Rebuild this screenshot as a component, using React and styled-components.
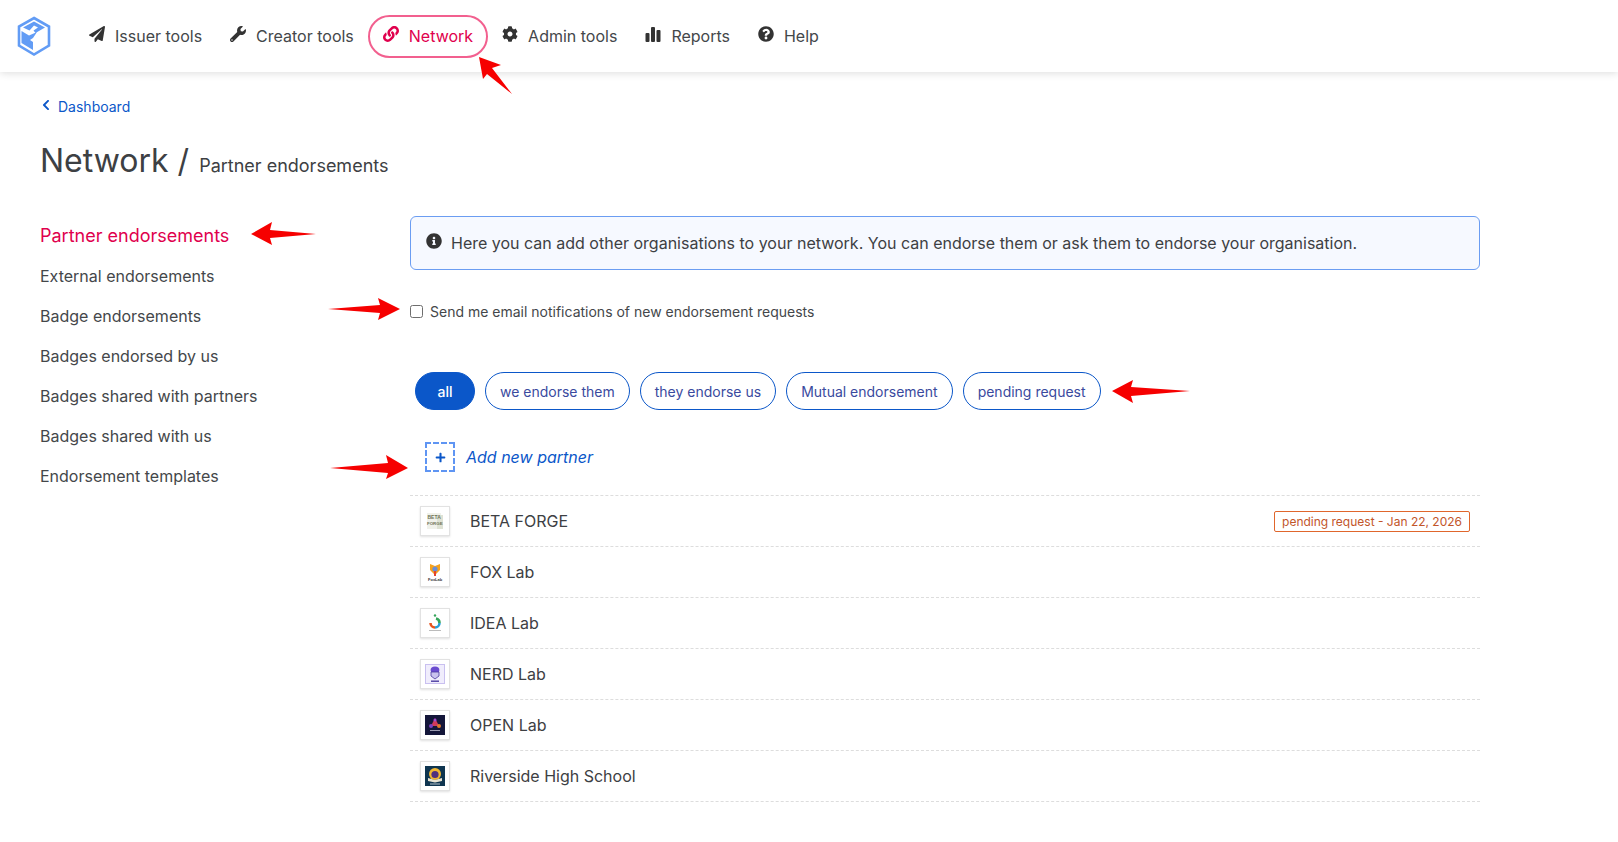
import styled, { createGlobalStyle } from 'styled-components'
import {
  FaChevronLeft,
  FaCog,
  FaInfoCircle,
  FaLink,
  FaPaperPlane,
  FaPlus,
  FaQuestionCircle,
  FaWrench,
} from 'react-icons/fa'

const GlobalStyle = createGlobalStyle`
  html, body {
    margin: 0;
    padding: 0;
    background: #fff;
    color: #3d4043;
    font-family: Inter, "Noto Sans", sans-serif;
  }
`

const Root = styled.div`
  position: relative;
  width: 1618px;
  height: 842px;
  overflow: hidden;
`

const Header = styled.header`
  display: flex;
  align-items: center;
  height: 72px;
  background: #fff;
  box-shadow: 0 1px 8px rgba(0, 0, 0, 0.14);
  padding-left: 17px;
`

const Logo = styled.svg`
  width: 34px;
  height: 41px;
  margin-right: 24px;
  flex: none;
`

const Nav = styled.nav`
  display: flex;
  align-items: center;
`

const NavItem = styled.a`
  display: flex;
  align-items: center;
  gap: 10px;
  height: 43px;
  margin: 0 ${(p) => (p.$active ? 0 : 14)}px;
  padding: 0 ${(p) => (p.$active ? 13 : 0)}px;
  box-sizing: border-box;
  border: ${(p) => (p.$active ? '2px solid #f2608f' : '0')};
  border-radius: 22px;
  font-size: 16px;
  color: ${(p) => (p.$active ? '#e0004d' : '#44474a')};
  svg {
    width: 16px;
    height: 16px;
    flex: none;
    margin-top: -4px;
    color: ${(p) => (p.$active ? '#e0004d' : '#333')};
  }
`

const Content = styled.div`
  padding: 26px 138px 0 40px;
`

const BackLink = styled.a`
  display: flex;
  align-items: center;
  gap: 7px;
  height: 17px;
  font-size: 14px;
  color: #0b57c9;
  svg {
    width: 10px;
    height: 12px;
    margin: -3px 0 0 1px;
  }
`

const Title = styled.h1`
  display: flex;
  align-items: baseline;
  gap: 10px;
  margin: 26px 0 0;
  height: 40px;
  font-size: 32px;
  line-height: 40px;
  font-weight: 400;
  color: #3d4043;
  small {
    font-size: 18px;
  }
`

const Columns = styled.div`
  display: grid;
  grid-template-columns: 370px 1070px;
  margin-top: 35px;
`

const SideNav = styled.ul`
  list-style: none;
  margin: 0;
  padding: 0;
`

const SideItem = styled.li`
  height: 40px;
  line-height: 40px;
  font-size: ${(p) => (p.$active ? 18 : 16)}px;
  color: ${(p) => (p.$active ? '#e0004d' : '#44474a')};
`

const Main = styled.main`
  display: flex;
  flex-direction: column;
`

const Alert = styled.div`
  display: flex;
  align-items: center;
  gap: 9px;
  height: 54px;
  box-sizing: border-box;
  padding: 0 15px;
  background: #f6f9ff;
  border: 1px solid #6b9df2;
  border-radius: 6px;
  font-size: 16px;
  color: #3d4043;
  svg {
    width: 16px;
    height: 16px;
    margin-top: -4px;
    flex: none;
    color: #333;
  }
`

const CheckRow = styled.label`
  display: flex;
  align-items: center;
  gap: 7px;
  margin-top: 32px;
  height: 18px;
  font-size: 14px;
  color: #44474a;
`

const CheckBox = styled.span`
  width: 13px;
  height: 13px;
  box-sizing: border-box;
  border: 1px solid #6e6e6e;
  border-radius: 2.5px;
  flex: none;
`

const Pills = styled.div`
  display: flex;
  gap: 10px;
  margin: 52px 0 0 5px;
`

const Pill = styled.button`
  height: 38px;
  padding: 0 14px;
  box-sizing: border-box;
  background: ${(p) => (p.$active ? '#0b57c9' : '#fff')};
  border: 1px solid #0b57c9;
  border-radius: 19px;
  font-family: inherit;
  font-size: 14px;
  font-weight: ${(p) => (p.$active ? 500 : 400)};
  color: ${(p) => (p.$active ? '#fff' : '#3a4a9e')};
  min-width: ${(p) => (p.$active ? 60 : 0)}px;
`

const AddRow = styled.div`
  display: flex;
  align-items: center;
  gap: 11px;
  height: 86px;
  box-sizing: border-box;
  padding: 9px 0 0 15px;
  border-bottom: 1px dashed #ddd;
  font-size: 16px;
  font-style: italic;
  color: #0b57c9;
`

const AddBox = styled.span`
  display: flex;
  align-items: center;
  justify-content: center;
  width: 30px;
  height: 30px;
  box-sizing: border-box;
  border: 2px dashed #5f95f3;
  color: #0b57c9;
  svg {
    width: 11px;
    height: 11px;
  }
`

const PartnerRow = styled.div`
  display: flex;
  align-items: center;
  gap: 20px;
  height: 51px;
  box-sizing: border-box;
  padding: 0 10px;
  border-bottom: 1px dashed #ddd;
  font-size: 16px;
  color: #3d4043;
`

const Thumb = styled.span`
  display: flex;
  align-items: center;
  justify-content: center;
  width: 30px;
  height: 30px;
  box-sizing: border-box;
  background: #fff;
  border: 1px solid #e2e2e2;
  box-shadow: 0 1px 2px rgba(0, 0, 0, 0.12);
  svg {
    width: 20px;
    height: 20px;
  }
`

const StatusTag = styled.span`
  margin-left: auto;
  height: 21px;
  line-height: 19px;
  box-sizing: border-box;
  padding: 0 7px;
  border: 1px solid #e0662c;
  border-radius: 2px;
  font-size: 12px;
  color: #c2552a;
`

const Arrow = styled.svg`
  position: absolute;
  left: ${(p) => p.$x}px;
  top: ${(p) => p.$y}px;
  overflow: visible;
`

const BarsIcon = () => (
  <svg viewBox="0 0 16 16" fill="currentColor">
    <rect x="0.5" y="7" width="4" height="9" rx="1" />
    <rect x="6" y="1" width="4" height="15" rx="1" />
    <rect x="11.5" y="4" width="4" height="12" rx="1" />
  </svg>
)

const BetaLogo = () => (
  <svg viewBox="0 0 20 20">
    <rect x="2" y="2" width="14" height="16" fill="#f0f1ea" />
    <rect x="12" y="4" width="6" height="14" fill="#dfe2d4" />
    <text x="2.5" y="8" fontSize="5" fontWeight="700" fontFamily="Liberation Sans, sans-serif" fill="#6f7558">BETA</text>
    <text x="2" y="14" fontSize="4.4" fontWeight="700" fontFamily="Liberation Sans, sans-serif" fill="#6f7558">FORGE</text>
  </svg>
)

const FoxLogo = () => (
  <svg viewBox="0 0 20 20">
    <path d="M5 2 L10 4 L15 2 L15 8 L10 13 L5 8 Z" fill="#f7a21b" />
    <circle cx="10" cy="7" r="2.6" fill="#6a8fd6" />
    <path d="M9 9 H11 V14 H9 Z" fill="#e2452e" />
    <text x="3" y="19" fontSize="4" fontWeight="700" fontFamily="Liberation Sans, sans-serif" fill="#333">FoxLab</text>
  </svg>
)

const IdeaLogo = () => (
  <svg viewBox="0 0 20 20" fill="none">
    <path d="M5.5 10 A4.5 4.5 0 0 0 10 14.5" stroke="#e8541e" strokeWidth="2.6" />
    <path d="M10 14.5 A4.5 4.5 0 0 0 14.5 10" stroke="#2a9fd8" strokeWidth="2.6" />
    <path d="M14.5 10 A4.5 4.5 0 0 0 11 5.6" stroke="#35a55a" strokeWidth="2.6" />
    <circle cx="10" cy="2.5" r="1.2" fill="#35a55a" />
    <rect x="4" y="17" width="12" height="1" fill="#bbb" />
  </svg>
)

const NerdLogo = () => (
  <svg viewBox="0 0 20 20">
    <rect x="0.5" y="0.5" width="19" height="19" fill="#f0edfc" stroke="#c9c0f0" />
    <ellipse cx="10" cy="6" rx="4.4" ry="3.6" fill="#6a4bd0" />
    <path d="M6 8 H14 V12 L10 15 L6 12 Z" fill="#c9c2ee" stroke="#4a3aa0" strokeWidth="0.8" />
    <rect x="6" y="16.5" width="8" height="1.4" fill="#4a3aa0" />
  </svg>
)

const OpenLogo = () => (
  <svg viewBox="0 0 20 20">
    <rect width="20" height="20" fill="#14163a" />
    <path d="M10 3 L14 11 H6 Z" fill="#d13a5a" />
    <circle cx="6" cy="11" r="2" fill="#7c3fc0" />
    <circle cx="14" cy="11" r="2" fill="#e07a2a" />
    <circle cx="10" cy="5" r="1.5" fill="#a24ad0" />
    <rect x="5" y="15" width="10" height="1" fill="#9a9ab0" />
  </svg>
)

const RiversideLogo = () => (
  <svg viewBox="0 0 20 20">
    <rect width="20" height="20" fill="#0f3550" />
    <circle cx="10" cy="8" r="6" fill="#f2b632" />
    <circle cx="10" cy="8.5" r="3.6" fill="#51307e" />
    <path d="M3 12 L10 14 L17 12 V15 L10 16.5 L3 15 Z" fill="#e9e3d2" />
    <rect x="5" y="17.5" width="10" height="1" fill="#b7c4cc" />
  </svg>
)

const sideItems = [
  'External endorsements',
  'Badge endorsements',
  'Badges endorsed by us',
  'Badges shared with partners',
  'Badges shared with us',
  'Endorsement templates',
]

const filters = ['we endorse them', 'they endorse us', 'Mutual endorsement', 'pending request']

const partners = [
  { name: 'BETA FORGE', logo: <BetaLogo />, status: 'pending request - Jan 22, 2026' },
  { name: 'FOX Lab', logo: <FoxLogo /> },
  { name: 'IDEA Lab', logo: <IdeaLogo /> },
  { name: 'NERD Lab', logo: <NerdLogo /> },
  { name: 'OPEN Lab', logo: <OpenLogo /> },
  { name: 'Riverside High School', logo: <RiversideLogo /> },
]

export default function App() {
  return (
    <Root>
      <GlobalStyle />
      <Header>
        <Logo viewBox="0 0 34 41" fill="#629cf5">
          <path d="M17 2 L32 10.5 V29.5 L17 38.5 L2 29.5 V10.5 Z" fill="none" stroke="#629cf5" strokeWidth="2.6" />
          <path d="M6 11.5 L17 5.5 L28 11.5 L18.5 17 L16.5 14.5 L21 11.5 L17 9.5 L12.5 14.5 Z" />
          <path d="M4.5 15 L12 19.5 L20 16 L16 22 L13 24 L16 26 V34 L4.5 27 Z" />
        </Logo>
        <Nav>
          <NavItem><FaPaperPlane />Issuer tools</NavItem>
          <NavItem><FaWrench />Creator tools</NavItem>
          <NavItem $active><FaLink />Network</NavItem>
          <NavItem><FaCog />Admin tools</NavItem>
          <NavItem><BarsIcon />Reports</NavItem>
          <NavItem><FaQuestionCircle />Help</NavItem>
        </Nav>
      </Header>
      <Content>
        <BackLink><FaChevronLeft />Dashboard</BackLink>
        <Title>Network / <small>Partner endorsements</small></Title>
        <Columns>
          <SideNav>
            <SideItem $active>Partner endorsements</SideItem>
            {sideItems.map((item) => (
              <SideItem key={item}>{item}</SideItem>
            ))}
          </SideNav>
          <Main>
            <Alert>
              <FaInfoCircle />
              Here you can add other organisations to your network. You can endorse them or ask them to endorse your organisation.
            </Alert>
            <CheckRow><CheckBox />Send me email notifications of new endorsement requests</CheckRow>
            <Pills>
              <Pill $active>all</Pill>
              {filters.map((f) => (
                <Pill key={f}>{f}</Pill>
              ))}
            </Pills>
            <AddRow>
              <AddBox><FaPlus /></AddBox>
              Add new partner
            </AddRow>
            {partners.map((p) => (
              <PartnerRow key={p.name}>
                <Thumb>{p.logo}</Thumb>
                {p.name}
                {p.status && <StatusTag>{p.status}</StatusTag>}
              </PartnerRow>
            ))}
          </Main>
        </Columns>
      </Content>
      <Arrow $x={479} $y={57} width="34" height="38" fill="#f60000">
        <path d="M0 0 L22 8 L13 11 L33 37 L8 17 L4 22 Z" />
      </Arrow>
      <Arrow $x={251} $y={222} width="65" height="24" fill="#f60000">
        <path d="M0 12 L21 0 L19 8 L65 12 L19 16 L21 23 Z" />
      </Arrow>
      <Arrow $x={328} $y={298} width="72" height="23" fill="#f60000">
        <path d="M72 11 L50 0 L52 7 L0 11 L52 15 L50 22 Z" />
      </Arrow>
      <Arrow $x={330} $y={455} width="78" height="25" fill="#f60000">
        <path d="M78 13 L56 0 L58 8 L0 13 L58 18 L56 24 Z" />
      </Arrow>
      <Arrow $x={1112} $y={380} width="78" height="24" fill="#f60000">
        <path d="M0 11 L21 0 L19 7 L78 11 L19 16 L21 23 Z" />
      </Arrow>
    </Root>
  )
}
